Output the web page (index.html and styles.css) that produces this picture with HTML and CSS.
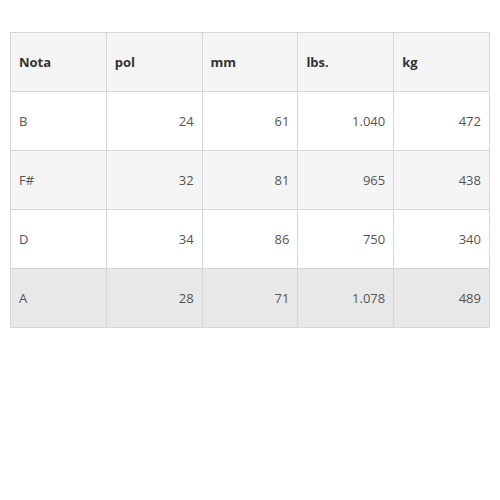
FILE: index.html
```html
<!DOCTYPE html>
<html>
<head>
<meta charset="utf-8">
<link rel="stylesheet" href="styles.css">
</head>
<body>
<table class="notes">
  <thead>
    <tr><th>Nota</th><th>pol</th><th>mm</th><th>lbs.</th><th>kg</th></tr>
  </thead>
  <tbody>
    <tr><td>B</td><td class="num">24</td><td class="num">61</td><td class="num">1.040</td><td class="num">472</td></tr>
    <tr class="alt"><td>F#</td><td class="num">32</td><td class="num">81</td><td class="num">965</td><td class="num">438</td></tr>
    <tr><td>D</td><td class="num">34</td><td class="num">86</td><td class="num">750</td><td class="num">340</td></tr>
    <tr class="hover"><td>A</td><td class="num">28</td><td class="num">71</td><td class="num">1.078</td><td class="num">489</td></tr>
  </tbody>
</table>
</body>
</html>
```
FILE: styles.css
```css
body {
  margin: 0;
  padding: 32px 10px 0 10px;
  font-family: "Open Sans", sans-serif;
  font-size: 13px;
  color: #555;
  background: #fff;
}
.notes {
  width: 480px;
  border-collapse: collapse;
  table-layout: fixed;
}
.notes th, .notes td {
  border: 1px solid #d6d6d6;
  padding: 20px 8px;
  line-height: 18px;
  text-align: left;
}
.notes th {
  font-weight: bold;
  color: #333;
  background: #f5f5f5;
}
.notes td.num {
  text-align: right;
}
.notes tr.alt td {
  background: #f5f5f5;
}
.notes tr.hover td {
  background: #e8e8e8;
}
```
